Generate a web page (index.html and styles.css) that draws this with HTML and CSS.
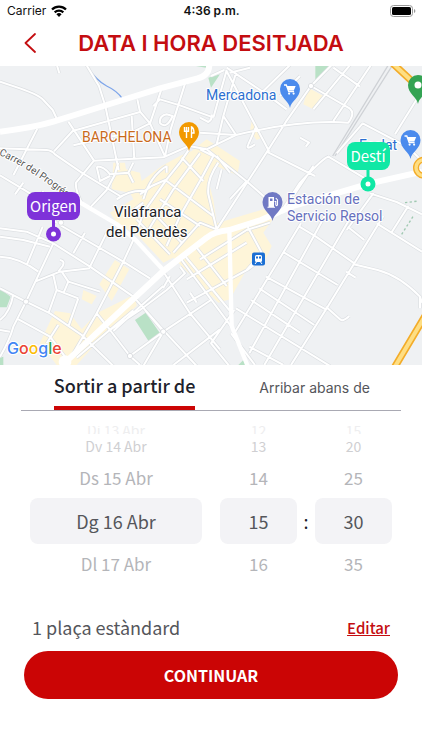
FILE: index.html
```html
<!DOCTYPE html>
<html lang="ca">
<head>
<meta charset="utf-8">
<meta name="viewport" content="width=device-width, initial-scale=1">
<title>Data i hora desitjada</title>
<link rel="stylesheet" href="styles.css">
</head>
<body>
<div class="status">
  <span class="carrier">Carrier
    <svg width="16" height="12" viewBox="0 0 16 12" aria-hidden="true"><g fill="none" stroke="#000" stroke-width="2.3"><path d="M1 4.5a10 10 0 0 1 14 0"/><path d="M3.7 7.3a6.2 6.2 0 0 1 8.6 0"/></g><path d="M8 12 5.4 9.3a3.7 3.7 0 0 1 5.2 0Z"/></svg>
  </span>
  <span class="clock">4:36 p.m.</span>
  <svg class="battery" width="26" height="12" viewBox="0 0 26 12" aria-hidden="true"><rect x=".5" y=".5" width="22" height="11" rx="3" fill="none" stroke="#999"/><rect x="2" y="2" width="19" height="8" rx="1.6"/><path d="M24 4v4q1.400-.6 1.400-2T24 4Z" fill="#999"/></svg>
</div>
<header class="header">
  <button class="back" aria-label="Enrere"><svg width="12" height="20" viewBox="0 0 12 20" aria-hidden="true"><path d="M11 1 1.5 10 11 19" fill="none" stroke="#c40d10" stroke-width="1.8" stroke-linecap="round" stroke-linejoin="round"/></svg></button>
  <h1>DATA I HORA DESITJADA</h1>
</header>
<main>
<svg class="map" viewBox="0 66 422 299" preserveAspectRatio="xMidYMid slice">
  <defs>
    <path id="pin" d="M0 19C-1 12-10 9-10 0A10 10 0 1 1 10 0C10 9 1 12 0 19Z"/>
    <g id="cart"><path d="M-6-4h2.300l2.400 6.500h5.400" fill="none" stroke="#fff" stroke-width="1.300"/><path d="M-3.300-3h9L3.800 1.400h-5.500Z" fill="#fff"/><circle cx="-.9" cy="4.600" r="1.100" fill="#fff"/><circle cx="3.600" cy="4.600" r="1.100" fill="#fff"/></g>
    <path id="streets" d="M0 47 60 67Q120 88 130 102L158 132 172 162M170-5 178 22M258-5 297 60 316 120 356 312M205 167 282 284 490 274 567 240M112 188 40 328M0 247 140 252Q155 253 165 265L245 320 360 390M162 256 218 195 420 138M412 100 420 137 450 172 495 272M485 68 450 172 400 197 220 238M556 50 512 190 495 272M460 120 480 100 540 118 633 152M395 150 403 280M282 284 228 350Q225 370 245 410M290 302Q310 300 330 325L385 320 400 350M290 302 300 345 330 330M355 290 345 325M0 328 120 400M70 350 45 385M130 375 110 410M320 372 345 325M320 372 270 425M480 172Q476 150 500 145L518 150Q500 190 480 172M600 155 625 168Q638 160 635 145
      M567 250 540 290 500 340 430 440 410 500M600 262 520 370 440 500M640 270 600 345 540 450 500 540M655 290Q620 340 625 385L650 490M567 240 620 250 650 235 670 150 708 207 650 235M620 250 745 350 830 425M650 270 690 320M400 290 385 320M430 400Q450 330 500 300M420 385 455 360 500 340M350 400Q390 370 440 375M500 345 640 450M480 400 600 480M410 460 510 565M460 440 545 530M520 560 600 470 650 490M430 410 390 440M545 275 610 345M500 300 500 320M640 270 600 250M740 345 690 400M665 310 650 370M600 200 708 207
      M678 12 808 257M995-3 933 60 858 167 798 262 650 490M933 60 1050 128Q1066 142 1045 170 900 160 708 207M1113-3 1000 165M800 257 945 330M1088 172 1010 262M1088 172 1225 244 1266 285M985 272 1095 337M985 272Q970 275 900 350L838 445M1255 92 1185 205M680 12 640 155M673 12 633 30M690 20 750 5M708 20 670 150M680 5 800 85 860 130M940 300 880 390M1110 382 1190 408 1266 445M1120 382 1040 492M780 85 870-3M900 215 927 230 917 242M767 185 745 235Q735 255 765 235M1050-3 940 130M1000 5 1080 62M900 30 840 90
      M903 472 703 802M980 440 748 862M1060 440 793 897M1150 450 983 722 873 897M898 482 948 512 1063 592M848 557 1013 657M798 632 980 732M778 667 943 777M708 727 990 900M753 702 900 800M1043 482 1093 522M1130 472 1266 557M1058 594 1133 612Q1200 630 1260 692L1266 710M978 722 1020 760Q1028 768 1048 750M1038 617 1067 635M1173 502 1225 420M1260 692v35M743 482 785 560 740 612M600 580 740 492 810 470M560 640 740 530M560 710 745 610 790 575M555 570 690 735M590 545 680 660M703 732 633 832 688 900M693 802 765 897M748 842 850 897
      M0 487 80 497 160 532 270 602 400 692 480 782 590 900M0 512 70 522 150 542M0 572Q60 575 115 617M128 482 80 597M160 532 78 707 40 782Q30 820 0 872M0 667 78 707 150 742 245 807 340 900M105 647 180 617 270 607M160 627 170 672 235 697M185 617 205 647 300 677M205 647 190 682M170 672 145 742M235 697 205 782M180 582Q196 585 188 600L175 617M180 477 370 587 450 637M400 522 370 587 290 742 205 887M290 742 330 792M50 757 150 812 195 872M40 685Q30 740 0 762M175 777 140 832M0 792 30 797M490 617 570 742 660 850M330 792 420 732 500 672 555 622 540 602M390 870 490 797 633 702M330 792 390 870 420 897M490 797 430 900M545 582 700 790M490 665 510 630M220 562 255 500M270 602 320 500M230 875 400 733M340 795 420 722 490 660M520 897 660 790M435 732 490 797M570 680 590 710M120 430 170 470"/>
    <g id="avenues"><path stroke-width="18" d="M0 197Q100 185 160 167L320 117 480 67 590 38Q628 30 628-5M195 890 490 615 620 515Q640 497 688 492L783 462 873 422 1110 352 1266 317"/><path stroke-width="13" d="M190 376 245 412 350 474 405 520 490 612M688 492 695 780 745 905"/></g>
  </defs>
  <rect y="66" width="422" height="299" fill="#eff1f3"/>
  <g transform="translate(0 66) scale(.33333)">
    <g fill="#fef5d9">
      <path d="M340 290H375L378 310 420 320 425 345 485 300 540 270 575 255 620 220 720 285 712 328 650 300 625 345 640 400 650 472 790 430 825 450 790 500 815 540 800 575 740 610 690 700 655 710 520 575 490 590 415 510 350 470 330 440 400 400 390 380 335 370Z"/>
      <path d="M925 65 970 90 940 130 910 115ZM755 165 785 215 770 222 750 195ZM345 582 388 610 360 660 335 705 298 655ZM250 672 290 690 275 715 245 700ZM165 735 210 742 245 790 290 742 405 685 410 720 340 780 290 830 230 897H170L120 830Z"/>
    </g>
    <g fill="#b9e1c6"><path d="M405 762 437 740 480 802 445 824ZM0 668 32 692 20 724H0ZM946-3H990L946 42ZM625 35 660 25 633 65ZM570-3H618V5ZM0 875 10 872V897H0ZM715 897 730 882 745 897Z"/></g>
    <path d="M258-3Q290 45 320 60 352 75 367 98" fill="none" stroke="#7da5ea" stroke-width="4"/>
    <path d="M1178-3 1005 270M1165-3 998 270" fill="none" stroke="#cfd2d6" stroke-width="4"/>
    <path d="M1205 505 1240 450M1215 410 1255 405" fill="none" stroke="#9ec8b0" stroke-width="4" stroke-dasharray="7 7"/>
    <g class="road-edge"><use href="#streets"/></g>
    <g class="road-face"><use href="#streets"/></g>
    <g class="avenues"><use href="#avenues"/></g>
    <circle cx="195" cy="887" r="19" fill="#fff"/>
    <g fill="#fff" stroke="#cfd2d6" stroke-width="2"><circle cx="78" cy="707" r="8"/><circle cx="490" cy="797" r="8"/><circle cx="390" cy="870" r="8"/><circle cx="183" cy="470" r="8"/><circle cx="933" cy="60" r="8"/></g>
    <g fill="none"><path d="M1178-8 1275 82M1275 750 1183 905" stroke="#f3ac29" stroke-width="22"/><path d="M1178-8 1275 82M1275 750 1183 905" stroke="#fede83" stroke-width="12"/><circle cx="1272" cy="305" r="24" stroke="#f3ac29" stroke-width="18"/><circle cx="1272" cy="305" r="24" stroke="#fede83" stroke-width="10"/></g>
  </g>
  <path id="progres" d="M-1 155Q30 168 80 208" fill="none"/>
  <text class="street-name"><textPath href="#progres">Carrer del Progrés</textPath></text>
  <g class="place">
    <text x="82" y="142" fill="#c96a1c">BARCHELONA</text>
    <text x="206" y="100" fill="#2c6fd0">Mercadona</text>
    <text x="359" y="150" fill="#2c6fd0">Esclat</text>
    <text x="287" y="204" fill="#6670bd">Estación de</text>
    <text x="287" y="221" fill="#6670bd">Servicio Repsol</text>
  </g>
  <g class="city"><text x="114" y="217">Vilafranca</text><text x="106" y="237">del Penedès</text></g>
  <g transform="translate(189 132)"><use href="#pin" fill="#f29900"/><path d="M-4.500-5v4.200h4V-5M-2.500-5V6M2.500 6V-5Q5-4 5 1H2.500" fill="none" stroke="#fff" stroke-width="1.400"/></g>
  <g transform="translate(290 89)"><use href="#pin" fill="#4b8bed"/><use href="#cart"/></g>
  <g transform="translate(410.500 140)"><use href="#pin" fill="#4b8bed"/><use href="#cart"/></g>
  <g transform="translate(418 85)"><use href="#pin" fill="#34a353"/><circle r="3.500" fill="#fff"/></g>
  <g transform="translate(272.500 202)"><use href="#pin" fill="#7079c4"/><path d="M-4-5h5.500V5H-4Z" fill="#fff"/><path d="M-2.500-3.500H0V-1H-2.500Z" fill="#7079c4"/><path d="M-5 5.300h7.500M2-.5h1.300V3q1.200 1.500 1.700-.3V-2L3.300-4" fill="none" stroke="#fff" stroke-width="1.100"/></g>
  <g transform="translate(258.500 259)"><rect x="-6.500" y="-6.500" width="13" height="13" rx="2" fill="#1b6fd4"/><rect x="-3.500" y="-4" width="7" height="7" rx="1.500" fill="#fff"/><path d="M-2.500-2.500h2v2h-2ZM.5-2.500h2v2h-2Z" fill="#1b6fd4"/><path d="M-2 3-3.500 5M2 3 3.500 5" stroke="#fff"/></g>
  <g fill="#7e32d9"><rect x="27" y="192" width="53" height="28" rx="8"/><path d="M52 218h3v10h-3Z"/><circle cx="53.500" cy="234" r="7.500"/></g><circle cx="53.500" cy="234" r="2.500" fill="#fff"/>
  <text class="stop" x="53.500" y="212">Origen</text>
  <g fill="#10e8a5"><rect x="347" y="142" width="43" height="28" rx="8"/><path d="M366.500 168h3v10h-3Z"/><circle cx="368" cy="184" r="7.500"/></g><circle cx="368" cy="184" r="2.500" fill="#fff"/>
  <text class="stop" x="368" y="162">Destí</text>
  <text class="google" x="7" y="354"><tspan fill="#4285f4">G</tspan><tspan fill="#ea4335">o</tspan><tspan fill="#fbbc05">o</tspan><tspan fill="#4285f4">g</tspan><tspan fill="#34a853">l</tspan><tspan fill="#ea4335">e</tspan></text>
</svg>
<div class="tabs" role="tablist">
  <button class="tab active" role="tab" aria-selected="true">Sortir a partir de</button>
  <button class="tab" role="tab" aria-selected="false">Arribar abans de</button>
</div>
<section class="picker" aria-label="Data i hora">
  <div class="wheel"><button class="edge">Dj 13 Abr</button><button class="far">Dv 14 Abr</button><button>Ds 15 Abr</button><button class="selected">Dg 16 Abr</button><button>Dl 17 Abr</button></div>
  <div class="wheel"><button class="edge">12</button><button class="far">13</button><button>14</button><button class="selected">15</button><button>16</button></div>
  <span class="colon">:</span>
  <div class="wheel"><button class="edge">15</button><button class="far">20</button><button>25</button><button class="selected">30</button><button>35</button></div>
</section>
<div class="summary"><span>1 plaça estàndard</span><a href="#">Editar</a></div>
<button class="continue">CONTINUAR</button>
</main>
</body>
</html>
```
FILE: styles.css
```css
* { box-sizing: border-box; }
body {
  margin: 0;
  background: #fff;
  color: #55565b;
  font-family: "Noto Sans CJK SC", "Noto Sans", sans-serif;
}
button {
  padding: 0;
  border: 0;
  background: none;
  color: inherit;
  font: inherit;
  cursor: pointer;
}
svg { display: block; }
.status {
  display: grid;
  grid-template-columns: 1fr auto 1fr;
  align-items: center;
  height: 22px;
  padding: 0 6px 0 7px;
  color: #111;
  font: 12px/20px Inter, sans-serif;
}
.carrier { display: flex; align-items: center; gap: 5px; }
.clock { font-weight: 600; }
.battery { justify-self: end; }
.header {
  display: grid;
  grid-template-columns: 60px 1fr 60px;
  align-items: center;
  height: 44px;
  padding-bottom: 2px;
}
.back {
  display: grid;
  place-items: center;
  height: 42px;
}
h1 {
  margin: 0;
  color: #c40d10;
  font: 600 22px/42px Inter, sans-serif;
  text-align: center;
  white-space: nowrap;
}
.map { width: 100%; height: auto; }
.road-edge { fill: none; stroke: #dcdfe2; stroke-width: 10; stroke-linejoin: round; }
.road-face { fill: none; stroke: #fff; stroke-width: 6; stroke-linejoin: round; }
.avenues { fill: none; stroke: #fff; stroke-linejoin: round; }
.map text { paint-order: stroke; stroke: #fff; stroke-width: 2px; stroke-linejoin: round; }
.place { font: 14px Roboto, sans-serif; }
.city { fill: #202124; font: 15px Roboto, sans-serif; }
.street-name { fill: #555; font: 10px Roboto, sans-serif; }
.map .stop { fill: #fff; stroke: none; font-size: 15px; text-anchor: middle; }
.google { font: 500 16px Inter, sans-serif; }
.tabs {
  display: grid;
  grid-template-columns: 6fr 5fr;
  justify-items: center;
  height: 46px;
  margin: 0 21px;
  border-bottom: 1px solid #a9a9b3;
}
.tab { height: 45px; font: 14px/44px Inter, sans-serif; }
.tab.active {
  border-bottom: 4px solid #cc0505;
  color: #20212b;
  font: 500 18px/41px "Noto Sans CJK SC", sans-serif;
}
.picker {
  display: grid;
  grid-template-columns: 190fr 77fr 18px 77fr;
  margin: 15px 30px 0;
}
.wheel { display: flex; flex-direction: column; }
.wheel:first-child { margin-right: 18px; }
.wheel button {
  height: 40px;
  color: #b4b5b9;
  font-size: 17px;
  line-height: 38px;
}
.wheel .edge {
  height: 8px;
  overflow: hidden;
  color: #eeeeef;
  font-size: 14px;
  line-height: 4px;
}
.wheel .far { height: 24px; color: #cfcfd2; font-size: 14px; line-height: 24px; }
.wheel .selected {
  height: 46px;
  border-radius: 8px;
  background: #f3f3f6;
  color: #55565b;
  font-size: 18px;
  line-height: 46px;
}
.colon {
  align-self: end;
  margin-bottom: 40px;
  color: #20212b;
  font-size: 18px;
  line-height: 46px;
  text-align: center;
}
.summary {
  display: flex;
  align-items: center;
  justify-content: space-between;
  margin: 28px 32px 8px;
  font-size: 18px;
  line-height: 31px;
}
.summary a { color: #c40d10; font-size: 15px; font-weight: 500; }
.continue {
  display: block;
  width: calc(100% - 48px);
  height: 48px;
  margin: 0 24px;
  border-radius: 24px;
  background: #cb0505;
  color: #fff;
  font-size: 16px;
  font-weight: 700;
}
```
